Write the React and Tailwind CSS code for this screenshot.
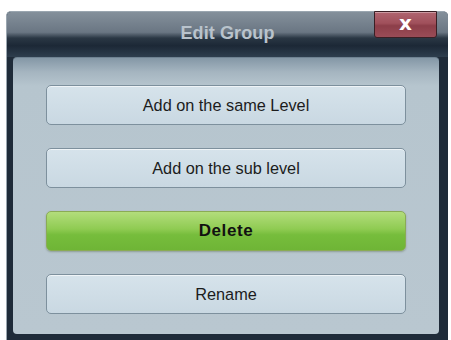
export default function App() {
  const btn =
    "h-[40px] w-full rounded-[5px] border border-[#7d909d] bg-[linear-gradient(to_bottom,#d6e3eb,#c9d8e2)] shadow-[inset_0_1px_0_rgba(255,255,255,0.6)] flex items-center justify-center text-[16.3px] text-[#1c1c1c]";
  return (
    <div
      className="w-[451px] h-[340px] bg-white pt-[11px] pl-[6px] pr-[3px] overflow-hidden"
      style={{ fontFamily: '"Liberation Sans", Arial, sans-serif' }}
    >
      <div className="relative h-[329px] rounded-t-[5px] border-t border-l border-[#9aa6b0] border-r-[#2a3644] bg-[#1f2b39] flex flex-col">
        <div className="h-[45px] shrink-0 rounded-t-[4px] bg-[linear-gradient(to_bottom,#84909b_0%,#6a7683_45%,#2a3744_58%,#1c2836_75%,#2e3e4e_100%)] flex items-center justify-center">
          <span className="text-[18px] font-bold text-[#b9c3cc] tracking-[0.1px] -mt-[2px]">
            Edit Group
          </span>
        </div>
        <div className="absolute top-[-1px] right-[11px] w-[63px] h-[27px] rounded-b-[3px] border border-[#3a1f25] bg-[linear-gradient(to_bottom,#b06570_0%,#a0505b_45%,#8c3e49_55%,#9a4c57_100%)] shadow-[inset_0_1px_0_rgba(255,255,255,0.35)] flex items-center justify-center">
          <span className="text-[20px] font-bold text-white leading-none -mt-[3px]" style={{ fontFamily: '"DejaVu Sans", sans-serif' }}>x</span>
        </div>
        <div className="ml-[6px] mr-[9px] h-[277px] rounded-[4px] border-t border-[#6f8292] bg-[linear-gradient(to_bottom,#8497a6_0px,#a5b5c0_14px,#b6c5ce_28px,#b9c7d0_100%)] pt-[27px] px-[33px] flex flex-col gap-[23px]">
          <div className={btn}>Add on the same Level</div>
          <div className={btn}>Add on the sub level</div>
          <div className="h-[40px] w-full rounded-[5px] border border-[#8aab55] bg-[linear-gradient(to_bottom,#b3dd7c_0%,#8fcb52_45%,#76bd3c_60%,#6fb536_100%)] shadow-[0_1px_2px_rgba(60,80,40,0.35)] flex items-center justify-center text-[17px] font-bold tracking-[0.6px] text-[#111]">
            Delete
          </div>
          <div className={btn}>Rename</div>
        </div>
      </div>
    </div>
  );
}
